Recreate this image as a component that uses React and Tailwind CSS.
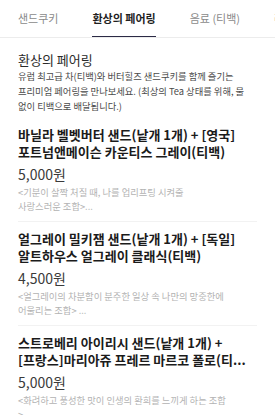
import React, { useState } from "react";

const tabs = ["샌드쿠키", "환상의 페어링", "음료 (티백)", "라이프스타일"];

const items = [
  {
    title: "바닐라 벨벳버터 샌드(낱개 1개) + [영국]포트넘앤메이슨 카운티스 그레이(티백)",
    price: "5,000원",
    desc: "<기분이 살짝 처질 때, 나를 업리프팅 시켜줄 사랑스러운 조합>...",
  },
  {
    title: "얼그레이 밀키잼 샌드(낱개 1개) + [독일]알트하우스 얼그레이 클래식(티백)",
    price: "4,500원",
    desc: "<얼그레이의 차분함이 분주한 일상 속 나만의 망중한에 어울리는 조합> ...",
  },
  {
    title: "스트로베리 아이리시 샌드(낱개 1개) + [프랑스]마리아쥬 프레르 마르코 폴로(티...",
    price: "5,000원",
    desc: "<화려하고 풍성한 맛이 인생의 환희를 느끼게 하는 조합 >...",
  },
];

const font = { fontFamily: '"Noto Sans CJK KR", "Noto Sans", sans-serif' };

const App = () => {
  const [active, setActive] = useState(1);

  return (
    <div className="w-[275px] h-[415px] overflow-hidden bg-white" style={font}>
      {/* Tabs */}
      <div className="flex h-[38px] gap-[34px] px-[18px] border-b border-[#ececec] whitespace-nowrap overflow-hidden">
        {tabs.map((t, i) => (
          <button
            key={t}
            onClick={() => setActive(i)}
            className={`relative flex h-full items-center text-[11px] ${
              i === active ? "font-bold text-[#1f1f1f]" : "text-[#8a8a8a]"
            }`}
          >
            {t}
            {i === active && (
              <span className="absolute left-0 right-0 bottom-[-1px] h-[2px] bg-[#2b2a45]"></span>
            )}
          </button>
        ))}
      </div>

      {/* Pairing intro */}
      <div className="px-[18px] pt-[13px] pb-[2px]">
        <h2 className="text-[13px] leading-[18px] text-[#2a2a2a]">환상의 페어링</h2>
        <p className="max-w-[234px] text-[9.3px] leading-[15px] text-[#4a4a4a] break-keep">
          유럽 최고급 차(티백)와 버터힐즈 샌드쿠키를 함께 즐기는 프리미엄 페어링을 만나보세요. (최상의 Tea 상태를 위해, 물 없이 티백으로 배달됩니다.)
        </p>
      </div>

      {/* Items */}
      <div className="px-[18px]">
        {items.map((item, i) => (
          <div
            key={i}
            className={`pb-2 border-b border-[#f2f2f2] ${i === 0 ? "pt-[10px]" : "pt-2"}`}
          >
            <h3 className="text-[13px] leading-[17px] font-bold text-[#1b1b1b] break-keep line-clamp-2">
              {item.title}
            </h3>
            <p className="mt-[6px] text-[14px] leading-[16px] text-[#3a3a3a]">{item.price}</p>
            <p className="mt-[3px] max-w-[209px] text-[9.3px] leading-[14px] text-[#b3b3b3] break-keep">
              {item.desc}
            </p>
          </div>
        ))}
      </div>
    </div>
  );
};

export default App;
